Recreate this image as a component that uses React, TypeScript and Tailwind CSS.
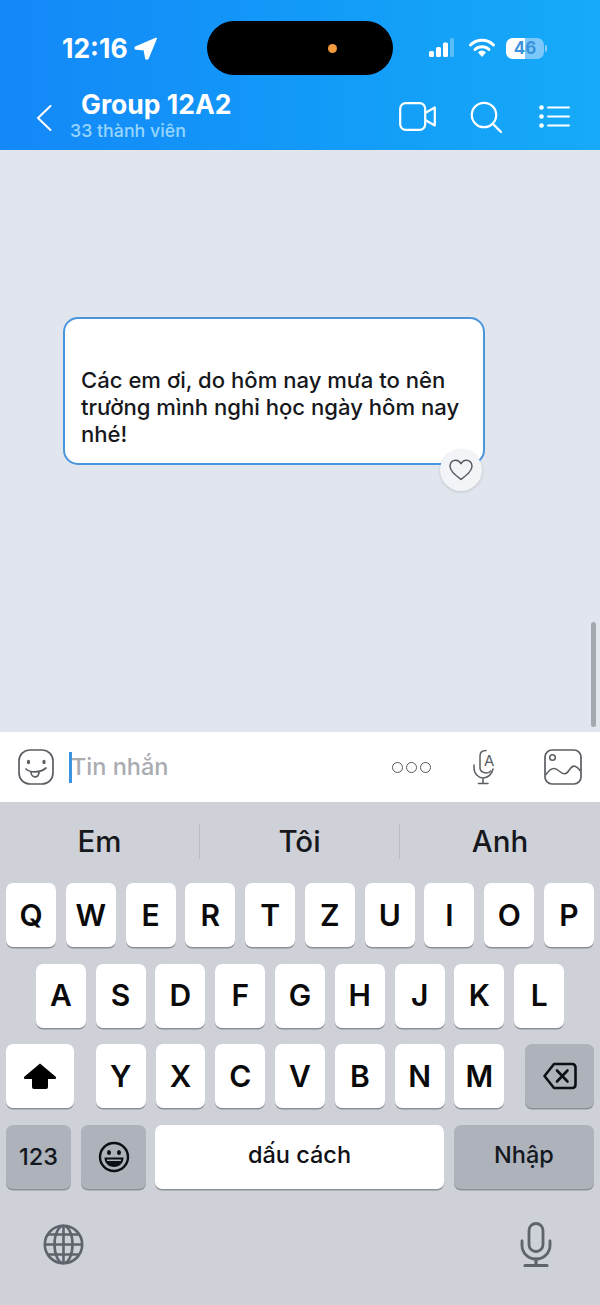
import React from 'react';

const FONT = "font-['Inter','Noto_Sans',sans-serif]";

const Key: React.FC<{ label: string }> = ({ label }) => (
  <div className="w-[50px] h-[64px] flex items-center justify-center bg-white rounded-[7px] shadow-[0_1.5px_0_#8d9098] text-[30px] font-semibold text-[#0a0a0a]">
    {label}
  </div>
);

const DarkKey: React.FC<{ className: string; children: React.ReactNode }> = ({ className, children }) => (
  <div className={`h-[64px] flex items-center justify-center bg-[#adb2bb] rounded-[7px] shadow-[0_1.5px_0_#8d9098] text-[#14181f] ${className}`}>
    {children}
  </div>
);

const App: React.FC = () => {
  return (
    <div className={`relative w-[600px] h-[1305px] overflow-hidden flex flex-col bg-[#cfd1d9] ${FONT}`}>
      {/* Header with status bar */}
      <header className="relative h-[150px] shrink-0 flex flex-col bg-gradient-to-r from-[#1488f8] to-[#16aaf8] text-white">
        <div className="absolute left-[207px] top-[21px] w-[186px] h-[54px] rounded-full bg-black flex items-center justify-end pr-[56px]">
          <div className="w-[9px] h-[9px] rounded-full bg-[#f59a3c]" />
        </div>

        <div className="h-[96px] pt-[33px] pl-[62px] pr-[53px] flex items-start justify-between">
          <div className="flex items-center gap-[6px] h-[30px]">
            <span className="text-[26.5px] leading-[30px] font-bold">12:16</span>
            <svg width="23" height="23" viewBox="0 0 22 22" className="mt-[1px]">
              <path d="M21 1.5 L1.5 10 Q1 11 2 11.2 L10 12 L11.5 20.5 Q12.5 21.2 13.2 20.5 Z" fill="white" stroke="white" strokeWidth="1.8" strokeLinejoin="round" />
            </svg>
          </div>
          <div className="flex items-center h-[30px]">
            <svg width="26" height="20" viewBox="0 0 26 20" className="mr-[14px]">
              <rect x="0" y="13" width="5" height="6" rx="1.5" fill="white" />
              <rect x="7" y="9" width="5" height="10" rx="1.5" fill="white" />
              <rect x="14" y="4.5" width="5" height="14.5" rx="1.5" fill="white" />
              <rect x="21" y="0" width="4" height="19" rx="1.5" fill="white" fillOpacity="0.3" />
            </svg>
            <svg width="26" height="20" viewBox="0 0 26 20" className="mr-[11px]">
              <path d="M1.5 7 A16.5 16.5 0 0 1 24.5 7" fill="none" stroke="white" strokeWidth="3" strokeLinecap="round" />
              <path d="M6 11.5 A10 10 0 0 1 20 11.5" fill="none" stroke="white" strokeWidth="3" strokeLinecap="round" />
              <path d="M13 12.5 A5.5 5.5 0 0 1 17 14.5 L13 19 L9 14.5 A5.5 5.5 0 0 1 13 12.5 Z" fill="white" />
            </svg>
            <div className="relative w-[38px] h-[21px] rounded-[7px] bg-[#7cc8fb] overflow-hidden flex items-center justify-center">
              <div className="absolute left-0 top-0 bottom-0 w-[19px] bg-white" />
              <span className="relative text-[17px] leading-none font-bold text-[#3a93da]">46</span>
            </div>
            <div className="w-[2px] h-[7px] ml-[1px] rounded-r bg-[#8fd0fb]" />
          </div>
        </div>

        <div className="flex-1 relative flex items-start pl-[36px] pr-[30px]">
          <svg width="16" height="26" viewBox="0 0 16 26" className="mt-[9px]">
            <path d="M14.5 1 L2 13 L14.5 25" fill="none" stroke="white" strokeWidth="2" strokeLinecap="round" strokeLinejoin="round" />
          </svg>
          <div className="ml-[18px] -mt-[7px] flex flex-col">
            <span className="ml-[11px] text-[26.5px] leading-[30px] font-bold whitespace-nowrap">Group 12A2</span>
            <span className="text-[17.8px] leading-[24px] font-medium text-[#97d5fd] whitespace-nowrap">33 thành viên</span>
          </div>
          <div className="ml-auto flex items-start">
            <svg width="37" height="29" viewBox="0 0 37 29" className="mt-[6px]">
              <rect x="1.2" y="1.2" width="25" height="26.6" rx="5.5" fill="none" stroke="white" strokeWidth="2.2" />
              <path d="M26.2 11 L35.8 5.5 V23.5 L26.2 18" fill="none" stroke="white" strokeWidth="2.2" strokeLinejoin="round" />
            </svg>
            <svg width="32" height="32" viewBox="0 0 32 32" className="ml-[34px] mt-[5px]">
              <circle cx="14" cy="14" r="12.2" fill="none" stroke="white" strokeWidth="2.2" />
              <path d="M23 23 L31 31" fill="none" stroke="white" strokeWidth="2.4" strokeLinecap="round" />
            </svg>
            <svg width="31" height="24" viewBox="0 0 31 24" className="ml-[37px] mt-[9px]">
              <circle cx="2.5" cy="2.5" r="2.3" fill="white" />
              <circle cx="2.5" cy="11.5" r="2.3" fill="white" />
              <circle cx="2.5" cy="20.5" r="2.3" fill="white" />
              <path d="M9 2.5 H30 M9 11.5 H30 M9 20.5 H30" stroke="white" strokeWidth="2" strokeLinecap="round" />
            </svg>
          </div>
        </div>
      </header>

      {/* Chat area */}
      <main className="relative h-[582px] shrink-0 bg-[#e0e5ee] pt-[167px] pl-[63px]">
        <div className="relative w-[422px] h-[148px] bg-white border-2 border-[#4a96dc] rounded-[15px] flex flex-col justify-end pl-[16px] pb-[15px]">
          <p className="text-[22.1px] leading-[27px] font-medium text-[#16181c] whitespace-pre-line">
            {"Các em ơi, do hôm nay mưa to nên\ntrường mình nghỉ học ngày hôm nay\nnhé!"}
          </p>
          <div className="absolute left-[375px] top-[130px] w-[42px] h-[42px] rounded-full bg-[#f3f4f7] shadow-[0_1px_3px_rgba(0,0,0,0.15)] flex items-center justify-center">
            <svg width="24" height="22" viewBox="0 0 24 22">
              <path d="M12 20.5 C5 15 1 11.5 1 7 C1 3.5 3.6 1.2 6.6 1.2 C8.8 1.2 10.8 2.4 12 4.6 C13.2 2.4 15.2 1.2 17.4 1.2 C20.4 1.2 23 3.5 23 7 C23 11.5 19 15 12 20.5 Z" fill="none" stroke="#555a60" strokeWidth="1.5" strokeLinejoin="round" />
            </svg>
          </div>
        </div>
        <div className="absolute left-[591px] top-[472px] w-[5px] h-[105px] rounded-full bg-[#a3a7ae]" />
      </main>

      {/* Composer */}
      <section className="h-[70px] shrink-0 bg-white flex items-center pl-[18px] pr-[18px]">
        <svg width="36" height="36" viewBox="0 0 36 36">
          <rect x="1" y="1" width="34" height="34" rx="11" fill="none" stroke="#5b5e63" strokeWidth="1.7" />
          <ellipse cx="10.5" cy="13" rx="1.6" ry="2.2" fill="#5b5e63" />
          <ellipse cx="26" cy="13" rx="1.6" ry="2.2" fill="#5b5e63" />
          <path d="M8 20 C12 24 22 24 28 19" fill="none" stroke="#5b5e63" strokeWidth="1.7" strokeLinecap="round" />
          <path d="M13 23 C13 29 21 30 21 23" fill="none" stroke="#5b5e63" strokeWidth="1.7" strokeLinecap="round" />
        </svg>
        <div className="w-[3px] h-[31px] ml-[15px] bg-[#3b94e0]" />
        <span className="-ml-[1px] text-[23.5px] leading-[30px] font-medium text-[#a9acb1] whitespace-nowrap">Tin nhắn</span>
        <div className="ml-auto flex items-center gap-[3px]">
          <div className="w-[11px] h-[11px] rounded-full border-[1.7px] border-[#55585d]" />
          <div className="w-[11px] h-[11px] rounded-full border-[1.7px] border-[#55585d]" />
          <div className="w-[11px] h-[11px] rounded-full border-[1.7px] border-[#55585d]" />
        </div>
        <svg width="28" height="36" viewBox="0 0 28 36" className="ml-[39px]">
          <path d="M10 7 C10 3 13 1.5 16 1.5 M10 7 V19 C10 22 12 23.5 16 24 C18 24 20 23 20.5 22" fill="none" stroke="#5b5e63" strokeWidth="1.5" strokeLinecap="round" />
          <path d="M4 16 V19 C4 25 9 29 13 29 C18 29 22 25 23 20 M13 29 V34 M8.5 34.5 H18" fill="none" stroke="#5b5e63" strokeWidth="1.5" strokeLinecap="round" />
          <text x="14" y="17" fontSize="15" fill="#5b5e63">A</text>
        </svg>
        <svg width="38" height="36" viewBox="0 0 38 36" className="ml-[46px]">
          <rect x="1" y="1" width="36" height="34" rx="7" fill="none" stroke="#5b5e63" strokeWidth="1.7" />
          <circle cx="8.5" cy="8.5" r="2.8" fill="none" stroke="#5b5e63" strokeWidth="1.5" />
          <path d="M1.5 26 C6 20 10 17 15 22 C20 26 22 26 26 20 C29 15 33 17 36.5 22" fill="none" stroke="#5b5e63" strokeWidth="1.6" />
        </svg>
      </section>

      {/* Keyboard */}
      <section className="flex-1 flex flex-col bg-[#cfd1d9]">
        <div className="h-[81px] flex items-center pb-[2px] text-[29.5px] font-medium text-[#16181c]">
          <div className="w-[199px] text-center">Em</div>
          <div className="w-px h-[35px] bg-[#b9bcc4]" />
          <div className="w-[199px] text-center">Tôi</div>
          <div className="w-px h-[35px] bg-[#b9bcc4]" />
          <div className="flex-1 text-center">Anh</div>
        </div>

        <div className="flex flex-col gap-[16.67px] px-[6px]">
          <div className="flex justify-between gap-[9.8px]">
            {['Q', 'W', 'E', 'R', 'T', 'Z', 'U', 'I', 'O', 'P'].map((k) => (
              <Key key={k} label={k} />
            ))}
          </div>
          <div className="flex justify-center gap-[9.8px]">
            {['A', 'S', 'D', 'F', 'G', 'H', 'J', 'K', 'L'].map((k) => (
              <Key key={k} label={k} />
            ))}
          </div>
          <div className="flex items-center gap-[9.8px]">
            <div className="w-[68px] h-[64px] mr-[12px] flex items-center justify-center bg-white rounded-[7px] shadow-[0_1.5px_0_#8d9098]">
              <svg width="34" height="28" viewBox="0 0 34 28">
                <path d="M17 1.5 L33 15 Q33.5 17 32 17 H25 V25 Q25 27 23 27 H11 Q9 27 9 25 V17 H2 Q0.5 17 1 15 Z" fill="black" />
              </svg>
            </div>
            {['Y', 'X', 'C', 'V', 'B', 'N', 'M'].map((k) => (
              <Key key={k} label={k} />
            ))}
            <DarkKey className="w-[69px] ml-[11px]">
              <svg width="34" height="28" viewBox="0 0 34 28">
                <path d="M11 2 H29 Q32.5 2 32.5 5.5 V22.5 Q32.5 26 29 26 H11 L1.5 14 Z" fill="none" stroke="#0c0f14" strokeWidth="2.6" strokeLinejoin="round" />
                <path d="M14 8.5 L24.5 19.5 M24.5 8.5 L14 19.5" fill="none" stroke="#0c0f14" strokeWidth="2.6" strokeLinecap="round" />
              </svg>
            </DarkKey>
          </div>
          <div className="flex items-center text-[23.5px] font-medium">
            <DarkKey className="w-[65px]">123</DarkKey>
            <DarkKey className="w-[65px] ml-[10px]">
              <svg width="32" height="32" viewBox="0 0 32 32">
                <circle cx="16" cy="16" r="14" fill="none" stroke="#0c0f14" strokeWidth="2.4" />
                <ellipse cx="11" cy="11.5" rx="2" ry="2.6" fill="#0c0f14" />
                <ellipse cx="21" cy="11.5" rx="2" ry="2.6" fill="#0c0f14" />
                <path d="M6.5 16.5 H25.5 C25.5 22 21.5 26 16 26 C10.5 26 6.5 22 6.5 16.5 Z" fill="#0c0f14" />
                <path d="M9 18.5 H23 V20 H9 Z" fill="#adb2bb" />
              </svg>
            </DarkKey>
            <div className="w-[289px] h-[64px] ml-[9px] flex items-center justify-center bg-white rounded-[7px] shadow-[0_1.5px_0_#8d9098] text-[#0f1115] pb-[5px]">
              dấu cách
            </div>
            <DarkKey className="w-[140px] ml-[10px] pb-[5px]">Nhập</DarkKey>
          </div>
        </div>

        <div className="flex items-start justify-between pl-[43px] pr-[48px] pt-[35px]">
          <svg width="41" height="41" viewBox="0 0 41 41">
            <g fill="none" stroke="#5f636c" strokeWidth="2.6">
              <circle cx="20.5" cy="20.5" r="18.7" />
              <ellipse cx="20.5" cy="20.5" rx="9" ry="18.7" />
              <path d="M20.5 2 V39 M2 20.5 H39 M5 10.5 H36 M5 30.5 H36" />
            </g>
          </svg>
          <svg width="32" height="46" viewBox="0 0 32 46" className="-mt-[2px]">
            <rect x="9" y="1.5" width="14" height="28" rx="7" fill="none" stroke="#5f636c" strokeWidth="2.8" />
            <path d="M2 19 V23 C2 31 8 37 16 37 C24 37 30 31 30 23 V19" fill="none" stroke="#5f636c" strokeWidth="2.8" strokeLinecap="round" />
            <path d="M16 37 V43 M5 43.5 H27" fill="none" stroke="#5f636c" strokeWidth="3.2" strokeLinecap="round" />
          </svg>
        </div>
      </section>
    </div>
  );
};

export default App;
